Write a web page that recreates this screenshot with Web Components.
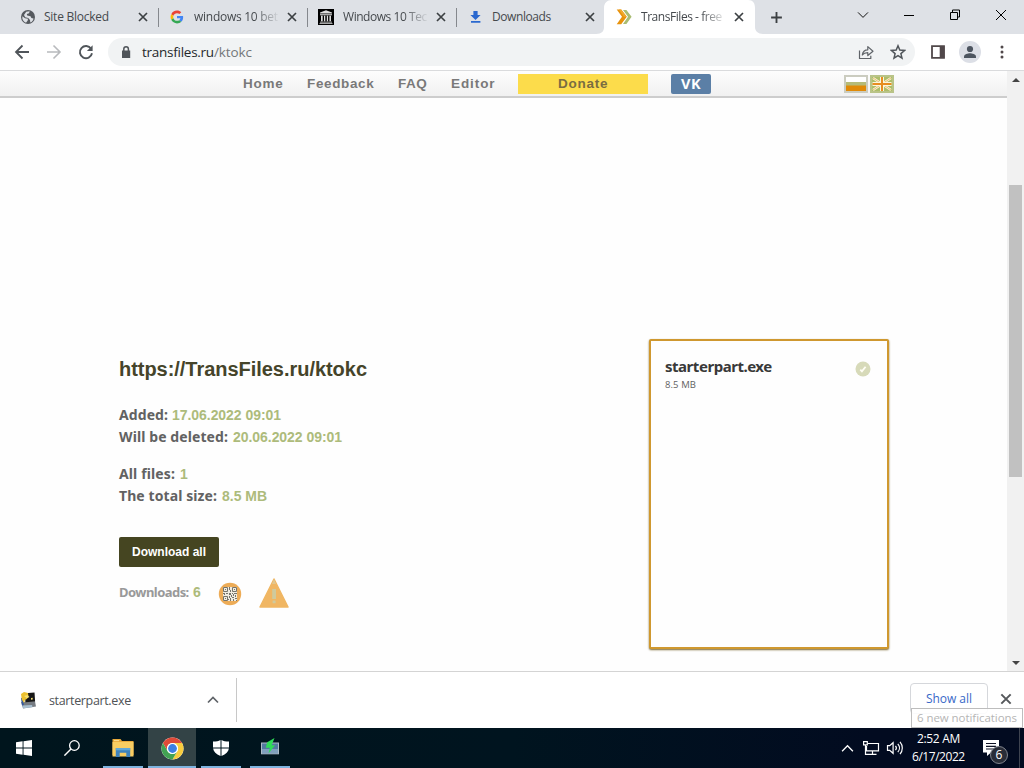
<!DOCTYPE html>
<html lang="en">
<head>
<meta charset="utf-8">
<title>TransFiles - free</title>
<style>
  body { margin: 0; width: 1024px; height: 768px; overflow: hidden; font-family: "Open Sans", "Noto Sans", sans-serif; }
</style>
</head>
<body>
<desktop-screen>
  <tab-strip slot="browser">
    <browser-tab icon="globe"><fit-text width="65">Site Blocked</fit-text></browser-tab>
    <browser-tab icon="google" fade><fit-text width="84">windows 10 bet</fit-text></browser-tab>
    <browser-tab icon="archive" fade><fit-text width="84">Windows 10 Tec</fit-text></browser-tab>
    <browser-tab icon="download" last><fit-text width="59">Downloads</fit-text></browser-tab>
    <browser-tab icon="transfiles" fade active><fit-text width="81">TransFiles - free</fit-text></browser-tab>
  </tab-strip>
  <address-bar slot="browser"></address-bar>
  <page-view slot="browser">
    <site-nav></site-nav>
    <file-page></file-page>
  </page-view>
  <download-shelf slot="browser"></download-shelf>
  <task-bar slot="taskbar"></task-bar>
</desktop-screen>

<script>
const ICONS = {
  globe: ['0 0 16 16', `<circle cx="8" cy="8" r="7" fill="#55595e"/>
    <path d="M2.4 7.2 5 9.3 8 9.8 7.7 11.6 6 13.7C3.4 12.6 1.8 10.2 2.4 7.2ZM6.2 2.7 9.7 2.3 9 4.2 6.8 5 7.2 6.6 10.5 7.2 11.4 9 13.5 9.6C13.2 11.6 12 13 10.3 13.6L10 11 8.2 9 5.2 8.2 4 6.1Z" fill="#dee1e6"/>`],
  google: ['-6 -6 60 60', `<path fill="#EA4335" d="M24 9.5c3.54 0 6.71 1.22 9.21 3.6l6.85-6.85C35.9 2.38 30.47 0 24 0 14.62 0 6.51 5.38 2.56 13.22l7.98 6.19C12.43 13.72 17.74 9.5 24 9.5z"/>
    <path fill="#4285F4" d="M46.98 24.55c0-1.57-.15-3.09-.38-4.55H24v9.02h12.94c-.58 2.96-2.26 5.48-4.78 7.18l7.73 6c4.51-4.18 7.09-10.36 7.09-17.65z"/>
    <path fill="#FBBC05" d="M10.53 28.59c-.48-1.45-.76-2.99-.76-4.59s.27-3.14.76-4.59l-7.98-6.19C.92 16.46 0 20.12 0 24c0 3.88.92 7.54 2.56 10.78l7.97-6.19z"/>
    <path fill="#34A853" d="M24 48c6.48 0 11.93-2.13 15.89-5.81l-7.73-6c-2.15 1.45-4.92 2.3-8.16 2.3-6.26 0-11.57-4.22-13.47-9.91l-7.98 6.19C6.51 42.62 14.62 48 24 48z"/>`],
  archive: ['0 0 16 16', `<path fill="#000" d="M0 0h16v16H0z"/><path fill="#ddd" d="M8 1.2 14 3.5V4.5H2V3.5ZM2 5.3h12v1H2ZM3 6.8h1.7v5.5H3ZM6 6.8h1.3v5.5H6ZM8.8 6.8h1.3v5.5H8.8ZM11.4 6.8H13v5.5h-1.6ZM2 12.7h12v.9H2ZM1.5 14h13v.8h-13Z"/>`],
  download: ['0 0 16 16', `<path fill="#2a68cf" d="M6.400 2h4.200v4h3L8.500 11 3.400 6h3ZM4 12h9.400v1.800H4Z"/>`],
  transfiles: ['0 0 16 16', `<path fill="#a9bc72" d="M7 1h3.4l5.2 6.8L10.400 15H7l5-7.2Z"/><path fill="#e8920c" d="M.7.500h4.500L10.800 7.800l-5.600 7.500H.7L6 7.800Z"/><path fill="#f0a92c" d="M5.200.5 10.800 7.800H8L2.800.500Z"/>`],
  cross: ['0 0 12 12', `<path d="m2 2 8 8m0-8-8 8" fill="none" stroke="currentColor" stroke-width="var(--stroke, 1.7)"/>`],
  plus: ['0 0 14 14', `<path d="M7 1.2v11.6M1.2 7h11.6" stroke="#3c4043" stroke-width="2"/>`],
  down: ['0 0 12 12', `<path d="m1 3.4 5 5 5-5" fill="none" stroke="#111"/>`],
  minimize: ['0 0 12 12', `<path d="M1 6.5h10" stroke="#000"/>`],
  restore: ['0 0 12 12', `<path d="M1.5 4.5h7v7h-7ZM3.5 4.5v-2.5h7v7h-2" transform="translate(0 -1)" fill="none" stroke="#000"/>`],
  winclose: ['0 0 12 12', `<path d="m1 1 10 10m0-10L1 11" stroke="#000"/>`],
  back: ['0 0 16 16', `<path d="M15 8H2m6.5-6.5L2 8l6.5 6.5" fill="none" stroke="currentColor" stroke-width="1.8"/>`],
  forward: ['0 0 16 16', `<path d="M1 8h13M7.5 1.5 14 8l-6.5 6.5" fill="none" stroke="currentColor" stroke-width="1.6"/>`],
  reload: ['0 0 16 16', `<path d="M13.1 4.7A6.1 6.1 0 1 0 14 9.3" fill="none" stroke="#50555a" stroke-width="1.9"/><path d="M14.6 1.200v5.700H8.900Z" fill="#50555a"/>`],
  lock: ['0 0 12 14', `<path d="M2 5.5h8.2V13H2Z" fill="#50555a"/><path d="M3.8 6V4a2.3 2.3 0 0 1 4.6 0v2" fill="none" stroke="#50555a" stroke-width="1.5"/>`],
  share: ['0 0 16 16', `<path d="M1.5 6.5v8h11.3v-2.8M4.3 11c.4-3.3 2-5.2 5.5-5.2V2.6L15 7.2 9.8 11.5V8.7C7 8.7 5.5 9.4 4.3 11Z" fill="none" stroke="#5f6368" stroke-width="1.2" stroke-linejoin="round"/>`],
  star: ['0 0 16 16', `<path d="m8 1.8 1.8 4.3 4.7.4-3.6 3.1 1.1 4.6L8 11.7l-4 2.5 1.1-4.6L1.5 6.5l4.7-.4Z" fill="none" stroke="#50555a" stroke-width="1.5"/>`],
  panel: ['0 0 16 16', `<path d="M2 2.2h12v11.6H2Z" fill="#fff" stroke="#50484a" stroke-width="1.8"/><path d="M9.7 2h4.6v12H9.7Z" fill="#50484a"/>`],
  avatar: ['0 0 22 22', `<circle cx="11" cy="11" r="11" fill="#dcdfe6"/><circle cx="11" cy="8" r="3.1" fill="#4d5560"/><path d="M5 17v-1.5c0-2.5 4-3.3 6-3.3s6 .8 6 3.3V17Z" fill="#4d5560"/>`],
  dots: ['0 0 4 14', `<circle cx="2" cy="2" r="1.5" fill="#50484a"/><circle cx="2" cy="7" r="1.5" fill="#50484a"/><circle cx="2" cy="12" r="1.5" fill="#50484a"/>`],
  ru: ['0 0 24 18', `<path fill="#fff" d="M0 0h24v18H0z"/><path fill="#b5bb78" d="M1.5 7h21v4h-21z"/><path fill="#e08a08" d="M1.5 10.5h21V16h-21z"/><path fill="none" stroke="#cbccc0" stroke-width="2" d="M1 1h22v16H1z"/>`],
  uk: ['0 0 24 18', `<path fill="#adbd68" d="M0 0h24v18H0z"/><path stroke="#faf6dd" stroke-width="2.200" d="m3 3 18 12M21 3 3 15"/><path stroke="#e5ac55" stroke-width=".8" d="m3 3 18 12M21 3 3 15"/><path stroke="#faf6dd" stroke-width="4" d="M12 2v14M2.500 9h19"/><path stroke="#e78d20" stroke-width="2" d="M12 2v14M2.500 9h19"/><path fill="none" stroke="#b9c387" stroke-width="2" d="M1 1h22v16H1z"/>`],
  check: ['0 0 16 16', `<circle cx="8" cy="8" r="7.500" fill="#d7dab9"/><path d="m5.300 8.700 1.600 1.600 3.700-4.600" fill="none" stroke="#fffef5" stroke-width="1.800"/>`],
  qr: ['0 0 24 24', `<circle cx="12" cy="12" r="11.2" fill="#edac57"/><path fill="#f1ece0" d="M5 5h14v14H5z"/>
    <path fill="none" stroke="#75746b" d="M5.500 5.500h4v4h-4ZM14.500 5.500h4v4h-4ZM5.500 14.500h4v4h-4Z"/>
    <path fill="#75746b" d="M7 7h1v1H7zM16 7h1v1h-1zM7 16h1v1H7zM11 5h1v3h-1zM12 8h1v2h-1zM5 11h2v1H5zM8 11h2v1H8zM11 11h2v2h-2zM14 11h1v1h-1zM16 11h3v1h-3zM6 12h1v1H6zM15 12h1v2h-1zM17 13h1v2h-1zM11 14h1v2h-1zM13 13h1v2h-1zM14 15h2v1h-2zM12 16h1v3h-1zM15 17h1v2h-1zM17 16h2v1h-2zM18 18h1v1h-1zM10 17h1v1h-1z"/>`],
  warning: ['0 0 30 30', `<path fill="#f0b663" stroke="#f0b663" stroke-width="1.5" stroke-linejoin="round" d="M15 1 29 29H1Z"/><path fill="#cfca9d" d="M13.200 11h3.800v10h-3.800zM13.600 22.600h3v2.600h-3z"/><path fill="#d8d2ac" d="m15 1 2 5h-4Z" opacity=".6"/>`],
  installer: ['0 0 18 18', `<path fill="#777c83" d="m2 11 14-.8 1 5.4-13 1.8Z"/><path fill="#a8bfd0" d="m3 14.5 10-.6.5 2.4-9 1Z"/><path fill="#171717" d="m6 2.2 9.500-.8.6 9-9.700.8Z"/><path fill="#33589c" d="m2 7 2-.5.8 7.500-1.800.4Z"/><path fill="#ecc12f" d="M2 3 5 1l4 1 .4 3L8 8l-2 .8L5 12 2.800 8.500Z"/><path fill="#f6e071" d="m5 5 3.500-1 2 2L8 7.200ZM12 7l1.700-.2v1.700L12 8.700Z"/>`],
  up: ['0 0 12 12', `<path d="m1 8.5 5-5 5 5" fill="none" stroke="currentColor" stroke-width="var(--stroke, 1.7)"/>`],
  windows: ['0 0 16 16', `<path fill="#fff" d="m0 2.2 6.6-.9v6.2H0ZM7.5 1.2 16 0v7.5H7.5ZM0 8.4h6.6v6.3L0 13.8ZM7.5 8.4H16V16l-8.5-1.2Z"/>`],
  search: ['0 0 16 16', `<circle cx="10.4" cy="5.5" r="4.8" fill="none" stroke="#fff" stroke-width="1.3"/><path d="m7 9-6.6 6.6" stroke="#fff" stroke-width="1.4"/>`],
  folder: ['0 0 22 20', `<path fill="#e9a93a" d="M.5 1h8l1.5 2h11.5v14H.5Z"/><path fill="#f8cd62" d="M.5 4h21v14.5H.5Z"/><path fill="#fff0b2" d="M2 2.3h5v.8H2z"/><path fill="#3e83bd" d="M3.8 10h14.4v9h-3.9v-4.2H7.7V19H3.8Z"/><path fill="#60a7d8" d="M3.8 10h14.4v2.3H3.8z"/>`],
  chrome: ['0 0 48 48', `<circle cx="24" cy="24" r="23" fill="#fff"/><path fill="#df4a38" d="M4.1 12.5a23 23 0 0 1 39.8 0H24a11.5 11.5 0 0 0-10 17.2Z"/><path fill="#f8cc3e" d="M43.9 12.5A23 23 0 0 1 24 47l10-17.2a11.5 11.5 0 0 0-10-17.3Z"/><path fill="#42a253" d="M24 47A23 23 0 0 1 4.1 12.5L14 29.7a11.5 11.5 0 0 0 20 0Z"/><circle cx="24" cy="24" r="11.5" fill="#fff"/><circle cx="24" cy="24" r="9.2" fill="#3d7fe3"/>`],
  shield: ['0 0 18 18', `<path fill="#fff" d="M8.5 1v7.5H1v-6C4.5 2.5 6.5 2 8.5 1ZM9.5 1C11.5 2 13.5 2.5 17 2.5v6H9.5ZM1.1 9.5h7.4V17C4 15.5 1.6 12.5 1.1 9.5ZM9.5 9.5h7.4C16.4 12.5 14 15.5 9.5 17Z"/>`],
  monitor: ['0 0 20 18', `<path fill="#aebbc6" d="M1 4.500h18v11.800H1z"/><path fill="#5479a0" d="M2 5.500h16v9.800H2z"/><path fill="#7f9fbc" d="M2 11h16v4.300H2z"/><path fill="#2fdc58" d="M14.500 0 7.200 4.300 5.800 9.800h4L8.500 15.500l6.500-8.300h-3.300Z"/>`],
  network: ['0 0 18 16', `<path fill="none" stroke="#fff" stroke-width="1.2" d="M6 3.500h10.500v7.300H4.500V6M10.500 11v3M7 14.300h7.500M1.600 1.600h3.700v3.200H1.600ZM3.500 5v9.300H8"/>`],
  volume: ['0 0 18 16', `<path fill="none" stroke="#fff" stroke-width="1.2" d="M1.500 5.700h2.200l3.400-3v10.600l-3.400-3H1.500ZM9.500 5.800a3.500 3.500 0 0 1 0 4.400M11.800 3.800a6.300 6.300 0 0 1 0 8.400M14 1.800a9.500 9.500 0 0 1 0 12.400"/>`],
  note: ['0 0 18 18', `<path fill="#fff" d="M1 1h16v12.500H9L5 17v-3.500H1Z"/><path stroke="#101426" stroke-width="1.2" d="M4 4.500h10M4 7.300h10M4 10h8"/>`],
};

// svg-icon name="..." size="16" or size="24x18"
class SvgIcon extends HTMLElement {
  connectedCallback() {
    if (this.shadowRoot) return;
    const [w, h = w] = (this.getAttribute('size') || '16').split('x');
    const [box, body] = ICONS[this.getAttribute('name')];
    this.attachShadow({ mode: 'open' }).innerHTML = `
      <style>:host { display: inline-flex; flex: none; } svg { display: block; }</style>
      <svg width="${w}" height="${h}" viewBox="${box}">${body}</svg>`;
  }
}

// tracks a line of text in or out until it has the given width
class FitText extends HTMLElement {
  connectedCallback() {
    if (this.shadowRoot) return;
    this.attachShadow({ mode: 'open' }).innerHTML =
      '<style>:host { display: inline-block; white-space: nowrap; flex: none; }</style><slot></slot>';
    const want = Number(this.getAttribute('width'));
    const n = this.textContent.length;
    this.style.letterSpacing = '0px';
    const have = this.getBoundingClientRect().width;
    this.style.letterSpacing = `${(want - have) / (n - 0.5)}px`;
    this.style.width = `${want}px`;
  }
}

function element(name, html) {
  const template = document.createElement('template');
  template.innerHTML = html;
  customElements.define(name, class extends HTMLElement {
    constructor() {
      super();
      this.attachShadow({ mode: 'open' });
      this.shadowRoot.appendChild(template.content.cloneNode(true));
    }

    connectedCallback() {
      const icon = this.shadowRoot.querySelector('[data-icon]');
      if (icon) icon.setAttribute('name', this.getAttribute('icon'));
    }
  });
}

element('desktop-screen', `
  <style>
    :host { display: flex; flex-direction: column; width: 1024px; height: 768px; background: #fff; }
  </style>
  <slot name="browser"></slot>
  <slot name="taskbar"></slot>
`);

element('tab-strip', `
  <style>
    :host { display: flex; height: 34px; box-sizing: border-box; padding-left: 9px; background: #dee1e6; }
    .new { width: 42px; display: grid; place-items: center; padding-left: 1px; }
    .window { margin-left: auto; display: flex; height: 29px; }
    .window span { width: 46px; display: grid; place-items: center; }
  </style>
  <slot></slot>
  <span class="new"><svg-icon name="plus" size="13"></svg-icon></span>
  <div class="window">
    <span><svg-icon name="down" size="12"></svg-icon></span>
    <span><svg-icon name="minimize" size="12"></svg-icon></span>
    <span><svg-icon name="restore" size="12"></svg-icon></span>
    <span><svg-icon name="winclose" size="12"></svg-icon></span>
  </div>
`);

element('browser-tab', `
  <style>
    :host { display: flex; align-items: center; width: 149px; height: 34px; box-sizing: border-box; padding-left: 11px;
      font-size: 12px; color: #45494d; position: relative; }
    :host::after { content: ""; position: absolute; right: -1px; top: 8px; width: 1px; height: 19px; background: #85888d; }
    :host([active])::after, :host([last])::after { display: none; }
    .shape { display: none; position: absolute; left: -9px; top: 0; }
    :host([active]) .shape { display: block; }
    svg-icon { position: relative; }
    .title { position: relative; width: 86px; margin-left: 8px; overflow: hidden; white-space: nowrap; line-height: 20px; }
    :host([fade]) .title, :host([last]) .title { width: 85px; margin-left: 9px; }
    :host([fade]) .title { -webkit-mask-image: linear-gradient(to right, #000 60px, transparent 86px); mask-image: linear-gradient(to right, #000 60px, transparent 86px); }
    .close { margin-left: 7px; color: #3c4043; }
  </style>
  <svg class="shape" width="168" height="34" viewBox="0 0 168 34"><path fill="#fff" d="M0 34C6 34 8 31 8 27V8C8 3 11 0 16 0H152C157 0 159 3 159 8V27C159 31 162 34 167 34Z"/></svg>
  <svg-icon data-icon size="16"></svg-icon>
  <div class="title"><slot></slot></div>
  <svg-icon class="close" name="cross" size="12"></svg-icon>
`);

element('address-bar', `
  <style>
    :host { display: flex; align-items: center; height: 37px; box-sizing: border-box; padding: 0 0 1px 6px; background: #fff;
      border-bottom: 1px solid #dadbdd; color: #50555a; }
    .cell { width: 32px; display: grid; place-items: center; }
    .off { color: #b8babd; }
    .pill { display: flex; align-items: center; box-sizing: border-box; width: 807px; height: 28px; margin-left: 6px;
      padding: 0 1px 0 12px; border-radius: 14px; background: #f1f3f4; font-size: 13.5px; }
    .url { margin-left: 10px; flex: 1; display: flex; color: #25282b; line-height: 24px; }
    .path { color: #74777a; }
  </style>
  <span class="cell"><svg-icon name="back" size="16"></svg-icon></span>
  <span class="cell off"><svg-icon name="forward" size="16"></svg-icon></span>
  <span class="cell"><svg-icon name="reload" size="16"></svg-icon></span>
  <div class="pill">
    <svg-icon name="lock" size="12x14"></svg-icon>
    <div class="url"><fit-text width="72">transfiles.ru</fit-text><fit-text class="path" width="38">/ktokc</fit-text></div>
    <span class="cell"><svg-icon name="share" size="16"></svg-icon></span>
    <span class="cell"><svg-icon name="star" size="16"></svg-icon></span>
  </div>
  <span class="cell" style="margin-left: 7px"><svg-icon name="panel" size="16"></svg-icon></span>
  <span class="cell"><svg-icon name="avatar" size="22"></svg-icon></span>
  <span class="cell"><svg-icon name="dots" size="4x14"></svg-icon></span>
`);

element('page-view', `
  <style>
    :host { display: flex; height: 600px; background: #fefefe; }
    main { flex: 1; display: flex; flex-direction: column; }
    .bar { width: 17px; display: flex; flex-direction: column; align-items: center; background: #f1f1f1; }
    .arrow { height: 17px; display: grid; place-items: center; }
    i { border: 4px solid transparent; border-top-width: 0; border-bottom-color: #444; }
    .down i { border-width: 4px 4px 0; border-top-color: #444; }
    .thumb { width: 13px; height: 292px; margin-top: 97px; background: #c1c1c1; }
    .down { margin-top: auto; }
  </style>
  <main><slot></slot></main>
  <div class="bar"><span class="arrow"><i></i></span><div class="thumb"></div><span class="arrow down"><i></i></span></div>
`);

element('site-nav', `
  <style>
    :host { display: flex; align-items: center; height: 27px; box-sizing: border-box; padding: 0 0 0 243px;
      background: linear-gradient(#fdfdfd, #f1f1f1); border-bottom: 2px solid #cdcdcd;
      font: bold 13.5px/20px "Liberation Sans", Arial, sans-serif; color: #797979; }
    fit-text + fit-text { margin-left: 24px; }
    .donate, .vk { display: grid; place-items: center; height: 20px; }
    .donate { width: 130px; margin-left: 23px; background: #fcdc4b; color: #796d42; }
    .vk { width: 40px; margin-left: 23px; background: #5b7fa6; color: #fff; border-radius: 2px; font: bold 14.5px/19px "Open Sans", sans-serif; }
    .flags { display: flex; gap: 2px; margin-left: 133px; }
  </style>
  <fit-text width="40">Home</fit-text>
  <fit-text width="67">Feedback</fit-text>
  <fit-text width="29">FAQ</fit-text>
  <fit-text width="44">Editor</fit-text>
  <span class="donate"><fit-text width="50">Donate</fit-text></span>
  <span class="vk"><fit-text width="20">VK</fit-text></span>
  <span class="flags"><svg-icon name="ru" size="24x18"></svg-icon><svg-icon name="uk" size="24x18"></svg-icon></span>
`);

element('file-page', `
  <style>
    :host { display: flex; flex: 1; justify-content: space-between; align-items: flex-start; padding: 241px 118px 0 119px; }
    .info { padding-top: 18px; font-family: "Liberation Sans", Arial, sans-serif; font-weight: bold; }
    h1 { display: flex; margin: 0 0 23px; font-size: 20px; line-height: 24px; color: #45442a; }
    .row { display: flex; align-items: center; gap: 5px; height: 22px; font-size: 14px; line-height: 22px; color: #adbb7b; }
    .label { font: bold 14px/22px "Noto Sans", "Open Sans", sans-serif; color: #626262; }
    .gap { margin-top: 15px; }
    .button { display: grid; place-items: center; width: 100px; height: 30px; margin-top: 30px; border-radius: 2px;
      background: #454521; color: #fff; font-size: 12px; }
    .stats { display: flex; align-items: center; height: 32px; margin-top: 9px; font-size: 14px; color: #adbb7b; }
    .stats .label { font-size: 13px; color: #999; margin-right: 4px; }
    file-card { flex: none; }
  </style>
  <div class="info">
    <h1><fit-text width="248">https://TransFiles.ru/ktokc</fit-text></h1>
    <div class="row" style="gap: 4px"><fit-text class="label" width="49">Added:</fit-text><fit-text width="109">17.06.2022 09:01</fit-text></div>
    <div class="row"><fit-text class="label" width="109">Will be deleted:</fit-text><fit-text width="109">20.06.2022 09:01</fit-text></div>
    <div class="row gap"><fit-text class="label" width="56">All files:</fit-text><fit-text width="8">1</fit-text></div>
    <div class="row"><fit-text class="label" width="98">The total size:</fit-text><fit-text width="45">8.5 MB</fit-text></div>
    <div class="button"><fit-text width="74">Download all</fit-text></div>
    <div class="stats">
      <fit-text class="label" width="70">Downloads:</fit-text><fit-text width="8">6</fit-text>
      <svg-icon name="qr" size="24" style="margin: 3px 0 0 17px"></svg-icon>
      <svg-icon name="warning" size="30" style="margin: 1px 0 0 17px"></svg-icon>
    </div>
  </div>
  <file-card>
    <fit-text slot="name" width="107">starterpart.exe</fit-text>
    <fit-text slot="size" width="31">8.5 MB</fit-text>
  </file-card>
`);

element('file-card', `
  <style>
    :host { display: flex; justify-content: space-between; align-items: flex-start; box-sizing: border-box; width: 240px; height: 310px;
      padding: 16px 16px 0 14px; border: 2px solid #cf982f; border-radius: 2px; box-shadow: 0 1px 2px #7b662f; background: #fefefe; }
    .name { display: flex; font: bold 15px/18px "Noto Sans", "Open Sans", sans-serif; color: #393939; }
    .size { display: flex; font-size: 9.5px; line-height: 14px; margin-top: 3px; color: #626262; }
    svg-icon { margin-top: 4px; }
  </style>
  <div>
    <div class="name"><slot name="name"></slot></div>
    <div class="size"><slot name="size"></slot></div>
  </div>
  <svg-icon name="check" size="16"></svg-icon>
`);

element('download-shelf', `
  <style>
    :host { display: flex; height: 57px; box-sizing: border-box; border-top: 1px solid #d4d4d4; background: #fff; position: relative; }
    .item { display: flex; align-items: center; box-sizing: border-box; width: 237px; height: 44px; margin-top: 6px; padding-left: 19px;
      border-right: 1px solid #c8c8c8; font-size: 12.5px; color: #505356; }
    .item fit-text { margin-left: 12px; }
    .item .menu { margin-left: 76px; color: #5f6368; }
    .all { margin: 11px 0 0 673px; box-sizing: border-box; width: 78px; height: 31px; border: 1px solid #d5d7db; border-radius: 4px;
      display: grid; place-items: center; font-size: 12px; color: #3868c8; }
    .close { margin: 20px 0 0 11px; color: #55585b; }
    .tip { position: absolute; left: 911px; top: 36px; width: 112px; height: 20px; box-sizing: border-box; border: 1px solid #bdbdbd;
      display: flex; background: rgba(255,255,255,.88); font-size: 11.5px; line-height: 18px; padding-left: 5px; color: #b5b5b5; }
  </style>
  <div class="item">
    <svg-icon name="installer" size="18"></svg-icon>
    <fit-text width="82">starterpart.exe</fit-text>
    <svg-icon class="menu" name="up" size="12"></svg-icon>
  </div>
  <div class="all"><fit-text width="46">Show all</fit-text></div>
  <svg-icon class="close" name="cross" size="14"></svg-icon>
  <div class="tip"><fit-text width="100">6 new notifications</fit-text></div>
`);

element('task-button', `
  <style>
    :host { display: grid; place-items: center; width: 48px; height: 40px; box-sizing: border-box; position: relative; }
    :host([open]) { margin-left: 1px; }
    :host([open])::after { content: ""; position: absolute; left: 4px; right: 4px; bottom: 0; height: 2px; background: #7eb3df; }
    :host([active]) { background: #334346; }
    :host([active])::after { left: 0; right: 0; }
  </style>
  <slot></slot>
`);

element('task-bar', `
  <style>
    :host { display: flex; height: 40px; background: linear-gradient(to right, #00151d, #00141f 50%, #020b20 85%); color: #fff; }
    .tray { margin-left: auto; display: flex; align-items: center; }
    .cell { width: 24px; display: grid; place-items: center; }
    .clock { width: 63px; display: flex; flex-direction: column; align-items: center; font-size: 12px; line-height: 18px; }
    .notes { width: 50px; height: 40px; display: grid; place-items: center; position: relative; border-right: 1px solid #3e4450; box-sizing: border-box; margin-right: 4px; padding-right: 8px; }
    .badge { position: absolute; left: 20px; top: 18px; width: 16px; height: 16px; border: 1px solid #80848d; border-radius: 50%;
      background: #292d38; font-size: 12px; line-height: 16px; text-align: center; }
  </style>
  <task-button><svg-icon name="windows" size="16"></svg-icon></task-button>
  <task-button><svg-icon name="search" size="16"></svg-icon></task-button>
  <task-button open style="margin-left: 3px"><svg-icon name="folder" size="22x20"></svg-icon></task-button>
  <task-button open active><svg-icon name="chrome" size="23"></svg-icon></task-button>
  <task-button open><svg-icon name="shield" size="18"></svg-icon></task-button>
  <task-button open><svg-icon name="monitor" size="20x18" style="margin-top: -3px"></svg-icon></task-button>
  <div class="tray">
    <span class="cell" style="--stroke: 1.2"><svg-icon name="up" size="13"></svg-icon></span>
    <span class="cell"><svg-icon name="network" size="18x16"></svg-icon></span>
    <span class="cell"><svg-icon name="volume" size="18x16"></svg-icon></span>
    <div class="clock"><fit-text width="43">2:52 AM</fit-text><fit-text width="53">6/17/2022</fit-text></div>
    <div class="notes"><svg-icon name="note" size="18"></svg-icon><span class="badge">6</span></div>
  </div>
`);

customElements.define('svg-icon', SvgIcon);
customElements.define('fit-text', FitText);
</script>
</body>
</html>
